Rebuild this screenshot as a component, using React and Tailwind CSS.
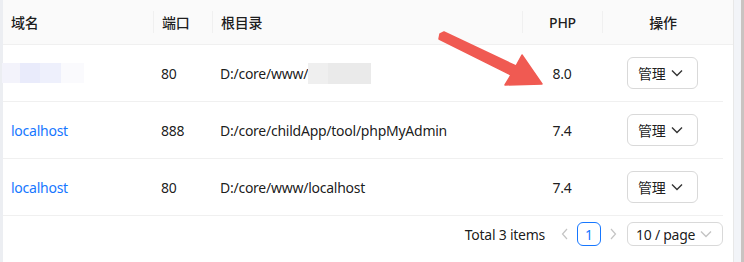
import React from 'react';

const font = { fontFamily: '"Noto Sans", "Noto Sans CJK SC", sans-serif' };

const Chevron = ({ className }) => (
  <svg width="12" height="8" viewBox="0 0 12 8" className={className}>
    <polyline points="1,1.5 6,6.5 11,1.5" fill="none" stroke="currentColor" strokeWidth="1.4" />
  </svg>
);

const ManageButton = () => (
  <button className="flex h-8 w-[71px] items-center justify-between rounded-md border border-[#d9d9d9] bg-white pl-[10px] pr-[14px] text-[14px] text-black/90">
    <span>管理</span>
    <Chevron className="text-black/80" />
  </button>
);

const Sep = () => <div className="h-[22px] w-px bg-[#f0f0f0]" />;

const rows = [
  { port: '80', root: 'D:/core/www/', php: '8.0', masked: true },
  { domain: 'localhost', port: '888', root: 'D:/core/childApp/tool/phpMyAdmin', php: '7.4' },
  { domain: 'localhost', port: '80', root: 'D:/core/www/localhost', php: '7.4' },
];

export default function App() {
  return (
    <div className="flex h-[262px] w-[744px] overflow-hidden bg-white text-[14px] tracking-[-0.25px] text-black/90" style={font}>
      <div className="w-[3px] bg-[#eceef2]" />

      <div className="relative w-[730px]">
        {/* header */}
        <div className="flex h-[45px] items-center border-b border-[#f0f0f0] bg-[#fafafa] font-medium">
          <div className="w-[150px] px-2">域名</div>
          <Sep />
          <div className="w-[58px] px-2">端口</div>
          <Sep />
          <div className="w-[309px] px-2">根目录</div>
          <Sep />
          <div className="w-[79px] text-center">PHP</div>
          <Sep />
          <div className="w-[120px] text-center">操作</div>
          <div className="h-full w-[10px]" />
        </div>

        {/* rows */}
        <div className="w-[720px]">
          {rows.map((r, i) => (
            <div key={i} className="flex h-[57px] items-center border-b border-[#f0f0f0]">
              <div className="w-[150px] px-2">
                {r.masked ? (
                  <div className="-ml-[9px] flex h-5">
                    <div className="w-[18px] bg-[#f3f3fb]" />
                    <div className="w-[20px] bg-[#e9ebfb]" />
                    <div className="w-[21px] bg-[#eef0fc]" />
                    <div className="w-[23px] bg-[#fafafd]" />
                  </div>
                ) : (
                  <span className="text-[#1677ff]">{r.domain}</span>
                )}
              </div>
              <div className="w-[59px] px-2">{r.port}</div>
              <div className="flex w-[310px] items-center px-2">
                <span>{r.root}</span>
                {r.masked && (
                  <div className="flex h-[21px]">
                    <div className="w-[20px] bg-[#efefef]" />
                    <div className="w-[43px] bg-[#eaeaea]" />
                  </div>
                )}
              </div>
              <div className="w-[80px] text-center">{r.php}</div>
              <div className="flex w-[121px] justify-center">
                <ManageButton />
              </div>
            </div>
          ))}
        </div>

        {/* pagination */}
        <div className="flex w-[720px] items-center justify-end pt-[6px]">
          <span className="mr-[16px]">Total 3 items</span>
          <svg width="8" height="12" viewBox="0 0 8 12" className="mr-[8px] text-[#c4c4c4]">
            <polyline points="6,1 1.5,6 6,11" fill="none" stroke="currentColor" strokeWidth="1.2" />
          </svg>
          <div className="flex h-6 w-6 items-center justify-center rounded-md border border-[#1677ff] text-[#1677ff]">1</div>
          <svg width="8" height="12" viewBox="0 0 8 12" className="ml-[8px] mr-[10px] text-[#c4c4c4]">
            <polyline points="2,1 6.5,6 2,11" fill="none" stroke="currentColor" strokeWidth="1.2" />
          </svg>
          <div className="flex h-6 w-[96px] items-center justify-between rounded-md border border-[#d9d9d9] pl-2 pr-[10px]">
            <span>10 / page</span>
            <Chevron className="text-[#c4c4c4]" />
          </div>
        </div>

        {/* annotation arrow */}
        <svg className="pointer-events-none absolute left-0 top-0" width="730" height="262">
          <polygon
            points="437,34 441,32 513,66 519,55 539,84 502,85 508,75 436,39"
            fill="#f05a52"
            stroke="#f05a52"
            strokeWidth="1.5"
            strokeLinejoin="round"
          />
        </svg>
      </div>

      <div className="w-px bg-[#e8e8e8]" />
      <div className="w-[7px] bg-[#f2f4f8]" />
      <div className="w-[3px] bg-[#c9c3c1]" />
    </div>
  );
}
